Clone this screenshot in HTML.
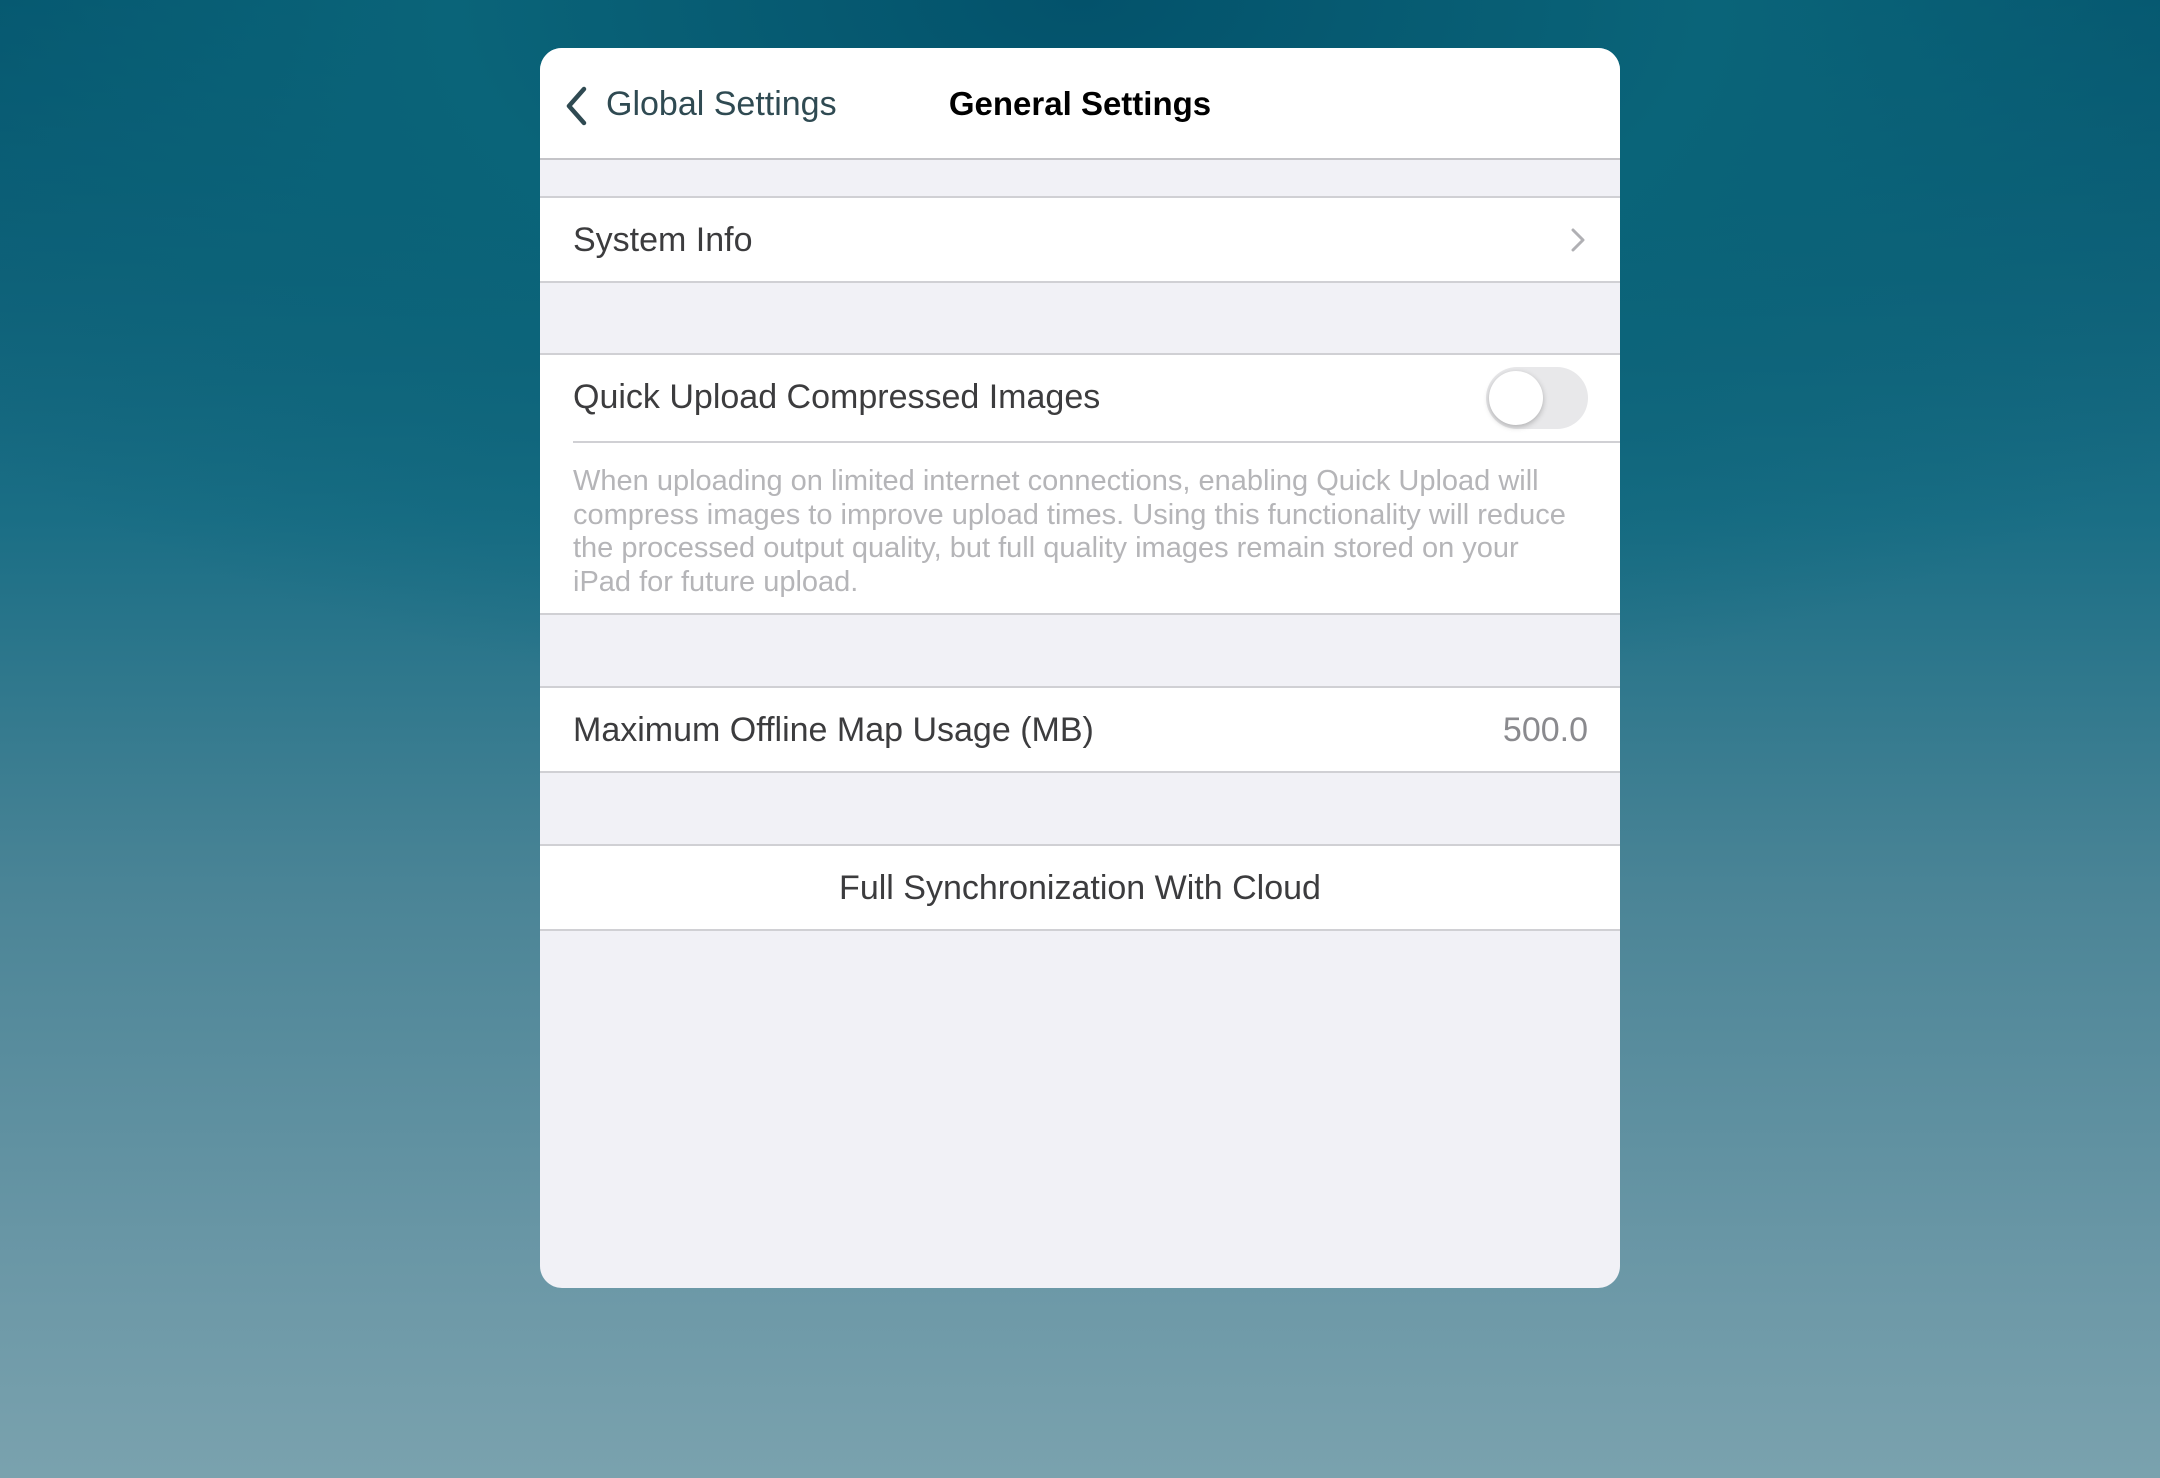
<!DOCTYPE html>
<html><head><meta charset="utf-8"><style>
*{margin:0;padding:0;box-sizing:border-box}
body{width:2160px;height:1478px;overflow:hidden;font-family:"Liberation Sans",sans-serif;
background:radial-gradient(ellipse 1800px 900px at 50% 0%,#03526b 0%,#0a6479 35%,rgba(40,110,130,0) 80%),linear-gradient(180deg,#03506a 0%,#1a6e85 35%,#4a8496 60%,#6a97a6 85%,#7aa2ae 100%);position:relative}
.p{position:absolute;left:540px;top:48px;width:1080px;height:1240px;background:#f1f1f6;border-radius:22px;overflow:hidden}
.nav{position:absolute;left:0;top:0;width:1080px;height:112px;background:#fff;border-bottom:2px solid #c4c4c8}
.t{position:absolute;font-size:34px;white-space:nowrap}
.row{position:absolute;left:0;width:1080px;background:#fff;border-top:2px solid #d0d0d4;border-bottom:2px solid #d0d0d4}
</style></head><body>
<div class="p">
<div class="nav">
<svg style="position:absolute;left:24px;top:37px" width="26" height="42" viewBox="0 0 26 42"><path d="M20 4 L5 21 L20 38" fill="none" stroke="#2f4a52" stroke-width="4.5" stroke-linecap="round" stroke-linejoin="round"/></svg>
<div class="t" style="left:66px;top:37px;color:#2f4a52">Global Settings</div>
<div class="t" style="left:0;width:1080px;text-align:center;top:37px;color:#000;font-weight:bold;font-size:33px">General Settings</div>
</div>
<div class="row" style="top:148px;height:87px"><div class="t" style="left:33px;top:23px;color:#3c3c3e">System Info</div>
<svg style="position:absolute;left:1030px;top:30px" width="16" height="24" viewBox="0 0 16 24"><path d="M3 2 L13 12 L3 22" fill="none" stroke="#b0b0b4" stroke-width="3" stroke-linecap="round" stroke-linejoin="round"/></svg></div>
<div class="row" style="top:305px;height:262px;border-top:2px solid #d0d0d4">
<div class="t" style="left:33px;top:23px;color:#3c3c3e">Quick Upload Compressed Images</div>
<div style="position:absolute;left:946px;top:12px;width:102px;height:62px;border-radius:31px;background:#e8e8ea"><div style="position:absolute;left:3px;top:4px;width:54px;height:54px;border-radius:50%;background:#fff;box-shadow:0 2px 6px rgba(0,0,0,.25)"></div></div>
<div style="position:absolute;left:33px;right:0;top:86px;border-top:2px solid #d0d0d4"></div>
<div style="position:absolute;left:33px;top:110px;width:1000px;font-size:29px;line-height:33.5px;color:#b5b5b8">When uploading on limited internet connections, enabling Quick Upload will compress images to improve upload times. Using this functionality will reduce the processed output quality, but full quality images remain stored on your iPad for future upload.</div>
</div>
<div class="row" style="top:638px;height:87px"><div class="t" style="left:33px;top:23px;color:#3c3c3e">Maximum Offline Map Usage (MB)</div><div class="t" style="right:32px;top:23px;color:#8a8a8e">500.0</div></div>
<div class="row" style="top:796px;height:87px"><div class="t" style="left:0;width:1080px;text-align:center;top:23px;color:#3c3c3e">Full Synchronization With Cloud</div></div>
</div>
</body></html>
